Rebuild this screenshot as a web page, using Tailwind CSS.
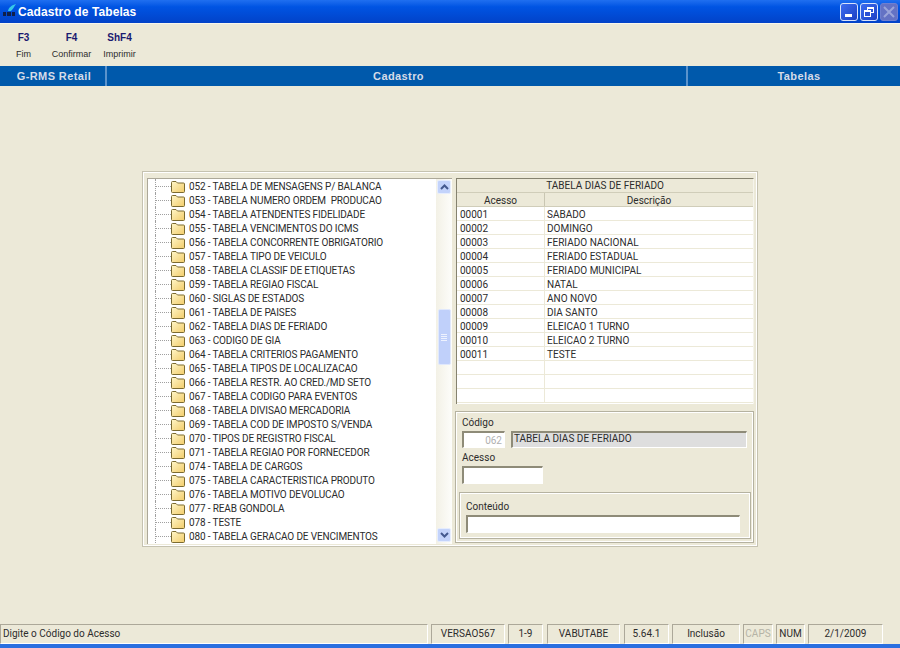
<!DOCTYPE html>
<html lang="en">
<head>
    <meta charset="UTF-8">
    <title>Cadastro de Tabelas</title>
    <script src="https://cdn.jsdelivr.net/npm/@tailwindcss/browser@4"></script>
</head>
<body class="w-[900px] h-[648px] overflow-hidden bg-[#ece9d8] flex flex-col font-['Roboto',sans-serif] text-[10px] text-[#2c2c2c]">

    <!-- title bar -->
    <div class="h-[23px] shrink-0 flex items-center pl-[2px] pr-[2px] bg-gradient-to-b from-[#1f6ff0] via-[#0054e3] via-30% to-[#0242c8]">
        <svg width="15" height="15" viewBox="0 0 15 15" class="shrink-0">
            <path d="M6 7 C7 3 10 1 14 0 C12 3 11 5 9 7 Z" fill="#35c8e8"/>
            <rect x="1" y="8" width="3" height="4" fill="#10204a"/>
            <rect x="5" y="8" width="4" height="4" fill="#10204a"/>
            <rect x="10" y="8" width="3" height="4" fill="#10204a"/>
        </svg>
        <div class="ml-[1px] text-white font-bold text-[12px] tracking-[0.1px] font-['Liberation_Sans',sans-serif]">Cadastro de Tabelas</div>
        <div class="ml-auto flex gap-[2px]">
            <div class="w-[18px] h-[18px] rounded-[3px] border border-[#d8e2fa] bg-gradient-to-br from-[#3c6cf0] to-[#1c3fc4] relative">
                <div class="absolute left-[4px] bottom-[3px] w-[7px] h-[3px] bg-white"></div>
            </div>
            <div class="w-[18px] h-[18px] rounded-[3px] border border-[#d8e2fa] bg-gradient-to-br from-[#3c6cf0] to-[#1c3fc4] relative">
                <div class="absolute left-[6px] top-[3px] w-[7px] h-[6px] border border-white border-t-2"></div>
                <div class="absolute left-[3px] top-[6px] w-[7px] h-[7px] border border-white border-t-2 bg-[#2a50d4]"></div>
            </div>
            <div class="w-[18px] h-[18px] rounded-[3px] border border-[#6f7fd0] bg-[#6472c4] flex items-center justify-center">
                <svg width="12" height="12" viewBox="0 0 12 12"><path d="M1 1 L11 11 M11 1 L1 11" stroke="#9aa4da" stroke-width="2"/></svg>
            </div>
        </div>
    </div>

    <!-- toolbar -->
    <div class="h-[43px] shrink-0 flex border-t border-[#f8f6ec] font-['Liberation_Sans',sans-serif]">
        <div class="w-[47px] pt-[8px] flex flex-col items-center gap-[4px]"><span class="font-bold text-[#1a1a70] text-[10px] leading-[12px]">F3</span><span class="text-[9px] leading-[12px]">Fim</span></div>
        <div class="w-[49px] pt-[8px] flex flex-col items-center gap-[4px]"><span class="font-bold text-[#1a1a70] text-[10px] leading-[12px]">F4</span><span class="text-[9px] leading-[12px] whitespace-nowrap">Confirmar</span></div>
        <div class="w-[47px] pt-[8px] flex flex-col items-center gap-[4px]"><span class="font-bold text-[#1a1a70] text-[10px] leading-[12px]">ShF4</span><span class="text-[9px] leading-[12px]">Imprimir</span></div>
    </div>

    <!-- module band -->
    <div class="h-[20px] shrink-0 flex bg-[#0059ab] text-[#d6dce8] font-bold text-[11px] tracking-[0.4px] leading-[21px] text-center font-['Liberation_Sans',sans-serif]">
        <div class="w-[107px] pl-[3px] border-r-2 border-[#5b93cc]">G-RMS Retail</div>
        <div class="w-[581px] pl-[4px] border-r-2 border-[#5b93cc]">Cadastro</div>
        <div class="flex-1 pl-[10px]">Tabelas</div>
    </div>

    <!-- content -->
    <div class="flex-1 pl-[142px] pt-[85px]">
        <div class="w-[616px] h-[376px] border border-[#c5c2b0] shadow-[inset_0_0_0_1px_#fff] pl-[4px] pt-[6px] flex gap-[4px]">
            <!-- tree -->
            <div class="w-[305px] h-[366px] flex bg-white border-l border-t border-[#aca899] overflow-hidden">
                <div id="tree" class="w-[288px] relative tracking-[-0.14px]"></div>
                <div class="w-[16px] flex flex-col items-center bg-gradient-to-r from-[#f3f1e6] to-[#fdfdfa] py-[1px] relative">
                    <div class="w-[14px] h-[14px] rounded-[2px] bg-[#c3d3fb] border border-[#e6edfd] flex items-center justify-center">
                        <svg width="9" height="6" viewBox="0 0 9 6"><path d="M1 5 L4.5 1.5 L8 5" fill="none" stroke="#44598f" stroke-width="2"/></svg>
                    </div>
                    <div class="w-[13px] h-[56px] mt-[115px] rounded-[2px] bg-[#c0d0fa] border border-[#e0e8fc] flex flex-col items-center justify-center gap-[1px]">
                        <div class="w-[6px] h-px bg-[#eef2fe]"></div><div class="w-[6px] h-px bg-[#eef2fe]"></div><div class="w-[6px] h-px bg-[#eef2fe]"></div><div class="w-[6px] h-px bg-[#eef2fe]"></div>
                    </div>
                    <div class="w-[14px] h-[14px] mt-auto mb-[1px] rounded-[2px] bg-[#c3d3fb] border border-[#e6edfd] flex items-center justify-center">
                        <svg width="9" height="6" viewBox="0 0 9 6"><path d="M1 1 L4.5 4.5 L8 1" fill="none" stroke="#44598f" stroke-width="2"/></svg>
                    </div>
                </div>
            </div>

            <!-- right side -->
            <div class="w-[298px] flex flex-col">
                <div class="h-[226px] flex flex-col border-l border-t border-[#85826f] bg-white border-r border-r-[#f5f4ec] overflow-hidden">
                    <div class="h-[14px] shrink-0 bg-[#ece9d8] text-center leading-[14px] border-b border-[#d0cdb9]">TABELA DIAS DE FERIADO</div>
                    <div class="h-[14px] shrink-0 flex bg-[#ece9d8] text-center leading-[15px] border-b border-[#d0cdb9]">
                        <div class="w-[88px] border-r border-[#c9c6b2]">Acesso</div>
                        <div class="flex-1">Descrição</div>
                    </div>
                    <div id="grid"></div>
                </div>
                <div class="mt-[7px] -ml-[1px] h-[132px] border border-[#b5b2a0] shadow-[inset_0_0_0_1px_#fff] relative px-[6px]">
                    <div class="leading-[13px] pt-[4px]">Código</div>
                    <div class="flex gap-[6px] mt-[2px]">
                        <div class="w-[43px] h-[17px] border-l-2 border-t-2 border-[#8e8b78] border-r border-b border-r-white border-b-white bg-white text-right pr-[2px] text-[#b0b0b0] leading-[15px]">062</div>
                        <div class="w-[236px] h-[17px] border-l-2 border-t-2 border-[#8e8b78] border-r border-b border-r-white border-b-white bg-[#dedede] pl-[1px] leading-[12px]">TABELA DIAS DE FERIADO</div>
                    </div>
                    <div class="leading-[13px] mt-[3px]">Acesso</div>
                    <div class="w-[81px] h-[18px] mt-[2px] border-l-2 border-t-2 border-[#8e8b78] border-r border-b border-r-white border-b-white bg-white"></div>
                    <div class="mt-[8px] -ml-[3px] w-[292px] h-[47px] border border-[#b5b2a0] shadow-[inset_0_0_0_1px_#fff] px-[6px]">
                        <div class="leading-[13px] pt-[7px]">Conteúdo</div>
                        <div class="w-[274px] h-[18px] mt-[2px] border-l-2 border-t-2 border-[#8e8b78] border-r border-b border-r-white border-b-white bg-white"></div>
                    </div>
                </div>
            </div>
        </div>
    </div>

    <!-- status bar -->
    <div id="status" class="h-[20px] shrink-0 flex leading-[18px]">
        <div class="w-[428px] mr-[3px] border-t border-l border-[#aca899] border-r border-b border-r-white border-b-white pl-[2px]">Digite o Código do Acesso</div>
        <div class="w-[74px] mr-[3px] border-t border-l border-[#aca899] border-r border-b border-r-white border-b-white text-center">VERSAO567</div>
        <div class="w-[35px] mr-[4px] border-t border-l border-[#aca899] border-r border-b border-r-white border-b-white text-center">1-9</div>
        <div class="w-[73px] mr-[4px] border-t border-l border-[#aca899] border-r border-b border-r-white border-b-white text-center">VABUTABE</div>
        <div class="w-[45px] mr-[3px] border-t border-l border-[#aca899] border-r border-b border-r-white border-b-white text-center">5.64.1</div>
        <div class="w-[68px] mr-[3px] border-t border-l border-[#aca899] border-r border-b border-r-white border-b-white text-center">Inclusão</div>
        <div class="w-[30px] mr-[3px] border-t border-l border-[#aca899] border-r border-b border-r-white border-b-white text-center text-[#b5b3a6]">CAPS</div>
        <div class="w-[29px] mr-[3px] border-t border-l border-[#aca899] border-r border-b border-r-white border-b-white text-center">NUM</div>
        <div class="w-[75px] border-t border-l border-[#aca899] border-r border-b border-r-white border-b-white text-center">2/1/2009</div>
    </div>
    <div class="h-[4px] shrink-0 bg-[#2a6fe0]"></div>

    <script>
        const treeItems = [
            '052 - TABELA DE MENSAGENS P/ BALANCA', '053 - TABELA NUMERO ORDEM  PRODUCAO', '054 - TABELA ATENDENTES FIDELIDADE',
            '055 - TABELA VENCIMENTOS DO ICMS', '056 - TABELA CONCORRENTE OBRIGATORIO', '057 - TABELA TIPO DE VEICULO',
            '058 - TABELA CLASSIF DE ETIQUETAS', '059 - TABELA REGIAO FISCAL', '060 - SIGLAS DE ESTADOS',
            '061 - TABELA DE PAISES', '062 - TABELA DIAS DE FERIADO', '063 - CODIGO DE GIA',
            '064 - TABELA CRITERIOS PAGAMENTO', '065 - TABELA TIPOS DE LOCALIZACAO', '066 - TABELA RESTR. AO CRED./MD SETO',
            '067 - TABELA CODIGO PARA EVENTOS', '068 - TABELA DIVISAO MERCADORIA', '069 - TABELA COD DE IMPOSTO S/VENDA',
            '070 - TIPOS DE REGISTRO FISCAL', '071 - TABELA REGIAO POR FORNECEDOR', '074 - TABELA DE CARGOS',
            '075 - TABELA CARACTERISTICA PRODUTO', '076 - TABELA MOTIVO DEVOLUCAO', '077 - REAB GONDOLA',
            '078 - TESTE', '080 - TABELA GERACAO DE VENCIMENTOS'
        ];
        const gridRows = [
            ['00001', 'SABADO'], ['00002', 'DOMINGO'], ['00003', 'FERIADO NACIONAL'], ['00004', 'FERIADO ESTADUAL'],
            ['00005', 'FERIADO MUNICIPAL'], ['00006', 'NATAL'], ['00007', 'ANO NOVO'], ['00008', 'DIA SANTO'],
            ['00009', 'ELEICAO 1 TURNO'], ['00010', 'ELEICAO 2 TURNO'], ['00011', 'TESTE'], ['', ''], ['', ''], ['', '']
        ];
        const folder = `<svg width="14" height="12" viewBox="0 0 14 12" class="shrink-0 mt-[2px]"><defs><linearGradient id="fg" x1="0" y1="0" x2="1" y2="1"><stop offset="0" stop-color="#fff6c8"/><stop offset="1" stop-color="#f2cc6a"/></linearGradient></defs><path d="M1.5 11.5 Q.5 11.5 .5 10.5 V1.5 Q.5 .5 1.5 .5 H5 L6.5 2 H12.5 Q13.5 2 13.5 3 V10.5 Q13.5 11.5 12.5 11.5 Z" fill="url(#fg)" stroke="#7a6a30"/></svg>`;

        document.getElementById('tree').innerHTML = treeItems.map(name => `
            <div class="h-[14px] flex items-center relative whitespace-pre">
                <div class="absolute left-[7px] top-0 bottom-0 border-l border-dotted border-[#a0a0a0]"></div>
                <div class="ml-[8px] w-[15px] border-t border-dotted border-[#a0a0a0]"></div>
                ${folder}
                <span class="ml-[4px]">${name}</span>
            </div>`).join('');

        document.getElementById('grid').innerHTML = gridRows.map(row => `
            <div class="h-[14px] flex leading-[15px] border-b border-[#ece9d8]">
                <div class="w-[88px] pl-[3px] border-r border-[#ece9d8]">${row[0]}</div>
                <div class="flex-1 pl-[2px]">${row[1]}</div>
            </div>`).join('');
    </script>
</body>
</html>
